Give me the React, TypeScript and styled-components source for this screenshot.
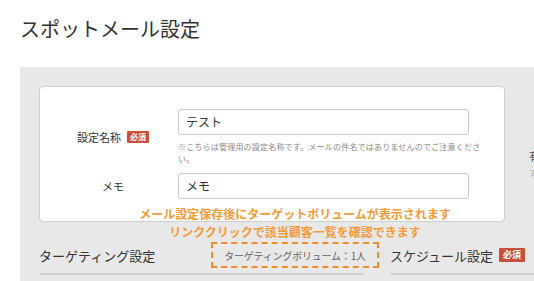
import React from "react";
import styled, { createGlobalStyle } from "styled-components";

const Global = createGlobalStyle`
  html, body { margin: 0; padding: 0; background: #fff; }
  body {
    font-family: "Noto Sans CJK JP", "Noto Sans", "Liberation Sans", sans-serif;
    color: #333;
    overflow: hidden;
  }
`;

const Page = styled.div`
  width: 534px;
  height: 281px;
  overflow: hidden;
  padding-left: 20px;
  box-sizing: border-box;
`;

const Title = styled.h1`
  margin: 0;
  padding-top: 16px;
  height: 67px;
  box-sizing: border-box;
  font-size: 20px;
  line-height: 26px;
  font-weight: 400;
  color: #333;
  white-space: nowrap;
`;

const Panel = styled.div`
  position: relative;
  background: #e8e8e8;
  padding: 19px 0 0 19px;
  width: 560px;
  height: 240px;
  box-sizing: border-box;
`;

const TopRow = styled.div`
  display: flex;
  gap: 24px;
  align-items: flex-start;
`;

const Card = styled.div<{ $w?: number; $h?: number }>`
  background: #fff;
  border: 1px solid #d0d0d0;
  border-radius: 4px;
  box-sizing: border-box;
  ${(p) => (p.$w ? `width: ${p.$w}px;` : "flex: 1;")}
  ${(p) => (p.$h ? `height: ${p.$h}px;` : "")}
  flex-shrink: 0;
`;

const FormCard = styled(Card)`
  padding: 22px 0 0 0;
  display: flex;
  flex-direction: column;
  gap: 8px;
`;

const FormRow = styled.div`
  display: flex;
  align-items: center;
`;

const LabelCell = styled.div`
  width: 138px;
  padding-left: 8px;
  box-sizing: border-box;
  display: flex;
  justify-content: center;
  align-items: center;
  gap: 6px;
  font-size: 11px;
  color: #333;
  white-space: nowrap;
`;

const Badge = styled.span`
  display: inline-block;
  background: #c9503c;
  color: #fff;
  font-size: 8px;
  font-weight: 700;
  line-height: 12px;
  height: 12px;
  padding: 0 3px;
  border-radius: 1px;
`;

const FieldCell = styled.div`
  display: flex;
  flex-direction: column;
`;

const Input = styled.div`
  width: 291px;
  height: 26px;
  box-sizing: border-box;
  border: 1px solid #c8c8c8;
  border-radius: 3px;
  padding: 0 7px;
  font-size: 12px;
  line-height: 24px;
  color: #333;
`;

const Note = styled.div`
  width: 308px;
  margin-top: 6px;
  font-size: 8px;
  letter-spacing: 0.2px;
  line-height: 12px;
  color: #8a8a8a;
`;

const SideCol = styled.div`
  padding-top: 62px;
  display: flex;
  flex-direction: column;
  gap: 3px;
  white-space: nowrap;
`;

const SideLabel = styled.div`
  font-size: 11px;
  color: #555;
`;

const SideNote = styled.div`
  font-size: 8px;
  color: #999;
`;

const LowerRow = styled.div`
  display: flex;
  gap: 26px;
  margin-top: 19px;
`;

const Column = styled.div<{ $w?: number }>`
  display: flex;
  flex-direction: column;
  gap: 4px;
  ${(p) => (p.$w ? `width: ${p.$w}px; flex-shrink: 0;` : "flex: 1;")}
`;

const SectionHead = styled.div`
  height: 28px;
  display: flex;
  align-items: center;
  gap: 6px;
  font-size: 13px;
  color: #333;
  white-space: nowrap;
`;

const HeadBadge = styled(Badge)`
  font-size: 9px;
  height: 14px;
  line-height: 14px;
  padding: 0 4px;
`;

const Annotation = styled.div`
  position: absolute;
  left: 0;
  top: 138px;
  width: 550px;
  pointer-events: none;
`;

const AnnoText = styled.div`
  width: 350px;
  margin-left: 100px;
  text-align: center;
  font-size: 12px;
  font-weight: 700;
  line-height: 18px;
  color: #f59a37;
  white-space: nowrap;
`;

const VolumeBox = styled.div`
  position: absolute;
  left: 191px;
  top: 175px;
  width: 168px;
  height: 26px;
  box-sizing: border-box;
  border: 2px dashed #f28c24;
  display: flex;
  align-items: center;
  justify-content: center;
  font-size: 10px;
  letter-spacing: -0.2px;
  color: #666;
  white-space: nowrap;
`;

export default function App() {
  return (
    <>
      <Global />
      <Page>
        <Title>スポットメール設定</Title>
        <Panel>
          <TopRow>
            <FormCard $w={466} $h={136}>
              <FormRow>
                <LabelCell>
                  設定名称<Badge>必須</Badge>
                </LabelCell>
                <FieldCell>
                  <Input>テスト</Input>
                  <Note>
                    ※こちらは管理用の設定名称です。メールの件名ではありませんのでご注意ください。
                  </Note>
                </FieldCell>
              </FormRow>
              <FormRow>
                <LabelCell>メモ</LabelCell>
                <FieldCell>
                  <Input>メモ</Input>
                </FieldCell>
              </FormRow>
            </FormCard>
            <SideCol>
              <SideLabel>有効期限</SideLabel>
              <SideNote>ア</SideNote>
            </SideCol>
          </TopRow>
          <LowerRow>
            <Column $w={325}>
              <SectionHead>ターゲティング設定</SectionHead>
              <Card $h={40} />
            </Column>
            <Column>
              <SectionHead>
                スケジュール設定<HeadBadge>必須</HeadBadge>
              </SectionHead>
              <Card $h={40} />
            </Column>
          </LowerRow>
          <Annotation>
            <AnnoText>メール設定保存後にターゲットボリュームが表示されます</AnnoText>
            <AnnoText>リンククリックで該当顧客一覧を確認できます</AnnoText>
          </Annotation>
          <VolumeBox>ターゲティングボリューム：1人</VolumeBox>
        </Panel>
      </Page>
    </>
  );
}
